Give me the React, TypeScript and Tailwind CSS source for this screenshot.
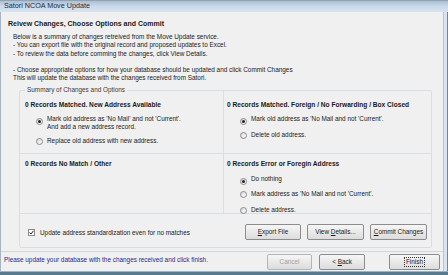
import React from 'react';

const font = { fontFamily: 'Tahoma, "Liberation Sans", Arial, sans-serif' };

function Radio({ checked }: { checked?: boolean }) {
  return (
    <span className="relative inline-flex w-[7px] h-[7px] shrink-0 rounded-full border border-[#8a8a8a] bg-gradient-to-br from-[#d8d8d8] to-white items-center justify-center">
      {checked && <span className="w-[3px] h-[3px] rounded-full bg-[#1f1f1f]" />}
    </span>
  );
}

function Option({ checked, children }: { checked?: boolean; children: React.ReactNode }) {
  return (
    <div className="flex items-start gap-[4px]">
      <div className="pt-[1px]">
        <Radio checked={checked} />
      </div>
      <div className="leading-[8px]">{children}</div>
    </div>
  );
}

function Btn({ children, className = '' }: { children: React.ReactNode; className?: string }) {
  return (
    <div
      className={`flex items-center justify-center h-[16px] rounded-[2px] border border-[#8c8c8c] bg-gradient-to-b from-[#f6f6f6] to-[#dcdcdc] text-[6.4px] ${className}`}
    >
      {children}
    </div>
  );
}

export default function App() {
  return (
    <div className="w-[448px] h-[275px] flex flex-col bg-[#f0f0f0] text-[#1a1a1a] overflow-hidden" style={font}>
      {/* title bar */}
      <div className="h-[12px] flex items-center pl-[4px] bg-gradient-to-b from-[#aebfd2] via-[#c9daec] to-[#d7e4f1] border-t border-[#8ea3b8] text-[7.2px] text-[#1e2a38]">
        Satori NCOA Move Update
      </div>

      <div className="flex flex-1 border-l border-[#a7b4c1]">
        <div className="flex-1 flex flex-col">
          <div className="pl-[7px] pt-[7px] text-[6.4px]">
            <div className="font-bold text-[7px] leading-[10px]">Reivew Changes, Choose Options and Commit</div>
            <div className="pl-[5px] mt-[4px] leading-[8.3px]">
              <div>Below is a summary of changes retreived from the Move Update service.</div>
              <div>- You can export file with the original record and proposed updates to Excel.</div>
              <div>- To review the data before comming the changes, click View Details.</div>
              <div className="h-[8.3px]" />
              <div>- Choose appropriate options for how your database should be updated and click Commit Changes</div>
              <div>This will update the database with the changes received from Satori.</div>
            </div>
          </div>

          {/* group box */}
          <div className="relative ml-[18px] mr-[11px] mt-[7px] h-[158px] border border-[#d5dfe5] rounded-[2px] text-[6.4px] flex flex-col">
            <div className="absolute -top-[5px] left-[5px] px-[2px] bg-[#f0f0f0] leading-[8px] text-[#3a3a3a]">
              Summary of Changes and Options
            </div>
            <div className="grid grid-cols-[204px_1fr] grid-rows-[63px_60px]">
              <div className="border-r border-b border-[#d5dfe5] pl-[5px] pt-[10px]">
                <div className="font-bold text-[6.6px] leading-[8px]">0 Records Matched. New Address Available</div>
                <div className="pl-[11px] mt-[6px] flex flex-col gap-[6px]">
                  <Option checked>
                    <div>Mark old address as 'No Mail' and not 'Current'.</div>
                    <div>And add a new address record.</div>
                  </Option>
                  <Option>Replace old address with new address.</Option>
                </div>
              </div>
              <div className="border-b border-[#d5dfe5] pl-[3px] pt-[10px]">
                <div className="font-bold text-[6.6px] leading-[8px]">0 Records Matched. Foreign / No Forwarding / Box Closed</div>
                <div className="pl-[13px] mt-[6px] flex flex-col gap-[6px]">
                  <Option checked>Mark old address as 'No Mail and not 'Current'.</Option>
                  <Option>Delete old address.</Option>
                </div>
              </div>
              <div className="border-r border-b border-[#d5dfe5] pl-[5px] pt-[6px]">
                <div className="font-bold text-[6.6px] leading-[8px]">0 Records No Match / Other</div>
              </div>
              <div className="border-b border-[#d5dfe5] pl-[3px] pt-[6px]">
                <div className="font-bold text-[6.6px] leading-[8px]">0 Records Error or Foregin Address</div>
                <div className="pl-[13px] mt-[7px] flex flex-col gap-[5px]">
                  <Option checked>Do nothing</Option>
                  <Option>Mark address as 'No Mail and not 'Current'.</Option>
                  <Option>Delete address.</Option>
                </div>
              </div>
            </div>
            <div className="flex-1 flex items-start pt-[10px] pr-[4px]">
              <div className="flex items-center gap-[5px] pl-[8px] mt-[4px]">
                <span className="w-[7px] h-[7px] border border-[#8a8a8a] bg-white flex items-center justify-center">
                  <svg width="5" height="5" viewBox="0 0 5 5">
                    <path d="M0.5 2.5 L2 4 L4.5 0.8" fill="none" stroke="#1f1f1f" strokeWidth="1" />
                  </svg>
                </span>
                <span>Update address standardization even for no matches</span>
              </div>
              <div className="ml-auto flex gap-[6px]">
                <Btn className="w-[56px]">
                  <span><u>E</u>xport File</span>
                </Btn>
                <Btn className="w-[57px]">
                  <span>View <u>D</u>etails...</span>
                </Btn>
                <Btn className="w-[57px]">
                  <span><u>C</u>ommit Changes</span>
                </Btn>
              </div>
            </div>
          </div>

          {/* status */}
          <div className="mt-[3px] border-t border-[#d5d5d5] flex items-start pt-[2px] h-[19px] pr-[3px]">
            <div className="pl-[3px] leading-[12px] text-[6.4px] text-[#1c2a8c]">Please update your database with the changes received and click finish.</div>
            <div className="ml-auto flex gap-[7px]">
              <Btn className="w-[45px] text-[#a0a0a0] border-[#b5b5b5]">Cancel</Btn>
              <Btn className="w-[46px]">
                <span>&lt; <u>B</u>ack</span>
              </Btn>
              <Btn className="w-[51px] ml-[17px] border-[#3c7fb1]">
                <span className="border border-dotted border-[#333] px-[1px] leading-[8px]">Finish</span>
              </Btn>
            </div>
          </div>
        </div>
        <div className="w-[5px] bg-[#d9e4ef] border-l border-[#b8c6d4] border-r border-r-[#6f8598]" />
      </div>
      <div className="h-[4px] bg-[#587a8e] border-t border-[#9fb2c1]" />
    </div>
  );
}
